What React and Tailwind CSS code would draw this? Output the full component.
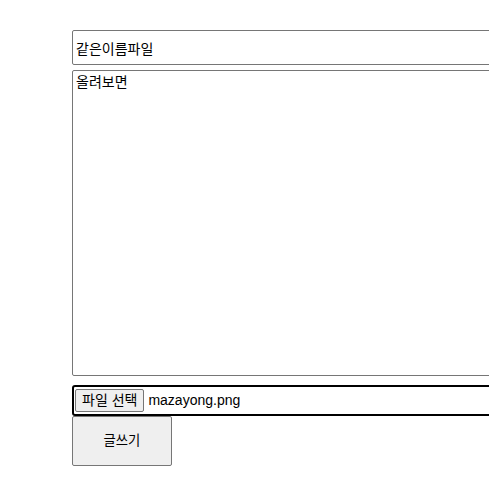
import React from 'react';

const font = { fontFamily: '"Liberation Sans", "Noto Sans CJK KR", sans-serif' };

export default function App() {
  return (
    <div className="w-full overflow-hidden bg-white" style={font}>
      <div className="pl-[72px] pt-[30px] w-[560px] flex flex-col">
        <input
          className="h-[35px] w-full border border-[#767676] rounded-[2px] px-[3px] text-[14px] text-black outline-none"
          defaultValue="같은이름파일"
        />
        <textarea
          className="mt-[5px] h-[306px] w-full border border-[#767676] rounded-[2px] px-[3px] py-[2px] text-[14px] leading-[18px] text-black resize-none outline-none"
          defaultValue="올려보면"
        />
        <div className="mt-[9px] h-[31px] w-full border-2 border-black rounded-[3px] flex items-center pl-[1px]">
          <span className="h-[23px] px-[6px] flex items-center bg-[#efefef] border border-[#767676] rounded-[2px] text-[14px] text-black">
            파일 선택
          </span>
          <span className="ml-[4px] text-[14px] text-black">mazayong.png</span>
        </div>
        <button className="w-[100px] h-[50px] bg-[#efefef] border border-[#767676] rounded-[2px] text-[13.33px] text-black">
          글쓰기
        </button>
      </div>
    </div>
  );
}
